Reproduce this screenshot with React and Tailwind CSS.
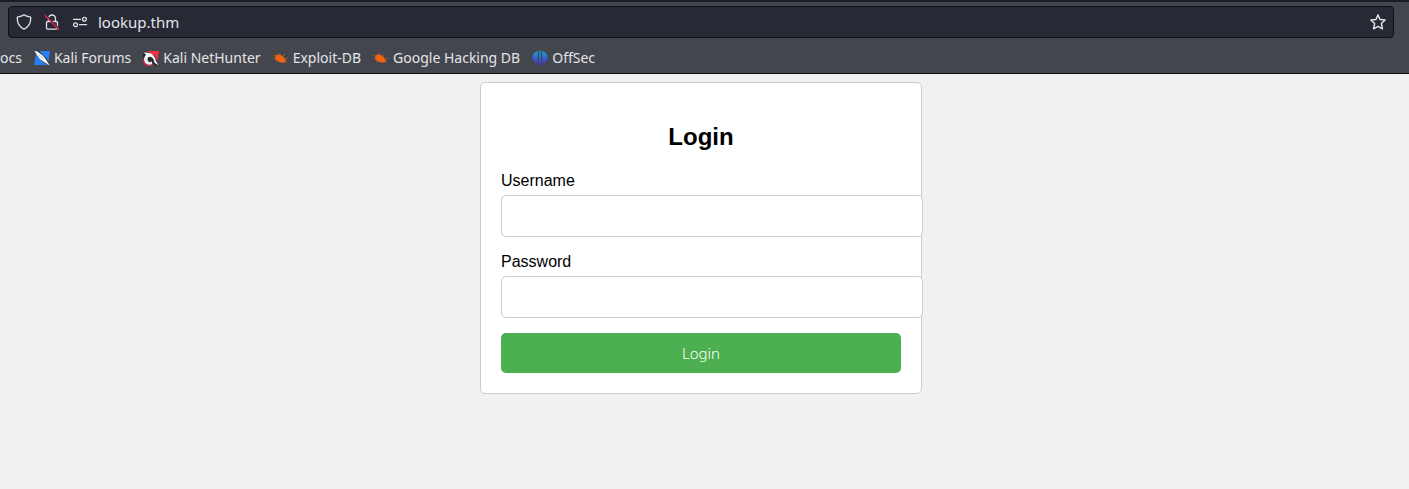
import React from "react";

function ShieldIcon() {
  return (
    <svg width="16" height="16" viewBox="0 0 16 16" fill="none" stroke="#e4e4e8" strokeWidth="1.3" strokeLinejoin="round" aria-hidden="true">
      <path d="M8 .8C9.6 2 12 2.7 14.7 3.2c.3 5-1.6 9.600-6.700 12C2.900 12.800 1 8.200 1.300 3.200 4 2.700 6.400 2 8 .8Z" />
    </svg>
  );
}

function InsecureLockIcon() {
  return (
    <svg width="16" height="16" viewBox="0 0 16 16" fill="none" aria-hidden="true">
      <path d="M4.500 7.500V4.500a3.500 3.500 0 0 1 7 0v3M3.700 7.500h8.600a1.200 1.200 0 0 1 1.200 1.200v5a1.500 1.500 0 0 1-1.500 1.500H4a1.500 1.500 0 0 1-1.500-1.500v-5a1.200 1.200 0 0 1 1.200-1.200Z" stroke="#e4e4e8" strokeWidth="1.3" />
      <path d="M1.800 1.200 15.300 14.700" stroke="#272935" strokeWidth="1.500" />
      <path d="M1.300 1.800 14.700 15.200" stroke="#e22850" strokeWidth="1.4" strokeLinecap="round" />
    </svg>
  );
}

function PermissionsIcon() {
  return (
    <svg width="16" height="16" viewBox="0 0 16 16" fill="none" stroke="#e4e4e8" strokeWidth="1.3" strokeLinecap="round" aria-hidden="true">
      <circle cx="12.500" cy="5.300" r="1.900" />
      <path d="M1.500 5.300h7" />
      <circle cx="3.500" cy="10.700" r="1.900" />
      <path d="M7.500 10.700h7" />
    </svg>
  );
}

function StarIcon() {
  return (
    <svg width="16" height="16" viewBox="0 0 18 18" fill="none" stroke="#e4e4e8" strokeWidth="1.6" strokeLinejoin="round" aria-hidden="true">
      <path d="m9 1 2.300 5.200 5.700.6-4.200 3.900 1.200 6L9 13.900 4 16.700l1.200-6L1 6.800l5.700-.6L9 1Z" />
    </svg>
  );
}

function ForumsIcon() {
  return (
    <svg width="16" height="16" viewBox="0 0 16 16" aria-hidden="true">
      <path d="M2.500 1H16l-2 14H0L2.500 1Z" fill="#267df5" />
      <path d="M.5 0 5 1l8 8 3 6.500-6-2.500-7-7L.5 0Z" fill="#24262e" />
      <path d="M.3.800 3.500 1.500 8.800 5.500l3.200 4 3.800 6-6-3.500-4.300-3.200L3 5.300.3.800Z" fill="#f5f5f5" />
      <path d="m4.500 4.500 5 4.500" stroke="#a5a8b0" strokeWidth=".6" />
    </svg>
  );
}

function NetHunterIcon() {
  return (
    <svg width="16" height="16" viewBox="0 0 16 16" aria-hidden="true">
      <path d="M2.500 1H16l-2 12-8-3-6 3L2.500 1Z" fill="#f5313f" />
      <path d="M0 4 1.500 1 6 2l6 4 4 9.500h-4L8 10l-2 5-5-1L0 4Z" fill="#24262e" />
      <path d="M.5 9.500 2 14l4 1.500h3.500" fill="none" stroke="#d8214c" strokeWidth="1.600" />
      <path d="M.5 2.500C3 2.300 5 2.300 7 3c3.500 1.300 5.300 4.500 6 8l2.700 4.500-4.200-2.700C11 9.500 9.300 6.500 6.500 6.700 4.300 7 4 10 5.500 11.500c1 1 2.500.8 3.500 0v2.500c-2.500 1.500-5.500.5-7-1.500C.5 10 .8 6.700 3 4.800L.5 2.500Z" fill="#f5f5f5" />
    </svg>
  );
}

function BugIcon() {
  return (
    <svg width="16" height="16" viewBox="0 0 16 16" aria-hidden="true">
      <path d="M2.500 6C4.500 3.500 7.500 4.500 10 6.500l3 4-1.500 2H7.500L3.500 10.500 1.800 8l.7-2Z" fill="#f26411" />
      <path d="M3.500 6.500 .5 5M3 8.500 .5 9.500M5 11l-2 1.500M7.500 5 6 3M10 6.500l1.500-2.500M11.500 9l3.500-1M12 11.500l2 1" fill="none" stroke="#b65a2c" strokeWidth=".8" />
    </svg>
  );
}

function OffSecIcon() {
  return (
    <svg width="16" height="16" viewBox="0 0 16 16" aria-hidden="true">
      <defs>
        <linearGradient id="offsec" gradientUnits="userSpaceOnUse" x1="0" y1="0" x2="0" y2="16">
          <stop offset="0" stopColor="#10a9c8" />
          <stop offset=".5" stopColor="#3267d0" />
          <stop offset="1" stopColor="#5b22d0" />
        </linearGradient>
      </defs>
      <path d="M6 1v4L5.200 13.500C2.500 12.800.5 10.500.5 7.500S2.800 1.600 6 1Z" fill="url(#offsec)" />
      <path d="M7.200.5h1.600l.4 15H6.800Z" fill="url(#offsec)" />
      <path d="M10 1v4l.8 8.500c2.700-.7 4.700-3 4.700-6S13.200 1.600 10 1Z" fill="url(#offsec)" />
    </svg>
  );
}

const bookmarks = [
  { label: "Kali Forums", Icon: ForumsIcon },
  { label: "Kali NetHunter", Icon: NetHunterIcon },
  { label: "Exploit-DB", Icon: BugIcon },
  { label: "Google Hacking DB", Icon: BugIcon },
  { label: "OffSec", Icon: OffSecIcon },
];

function BrowserToolbar() {
  return (
    <header className="border-t-2 border-b border-t-[#1c1d22] border-b-[#0c0c12] bg-[#44464e] font-['Noto_Sans',sans-serif] text-[#e4e4e8]">
      <div className="pt-1 pr-[15px] pl-2">
        <div className="flex h-8 items-center rounded border border-[#0f1016] bg-[#272935] px-[7px]">
          <div className="flex gap-3">
            <button type="button" aria-label="Tracking protection"><ShieldIcon /></button>
            <button type="button" aria-label="Connection not secure"><InsecureLockIcon /></button>
            <button type="button" aria-label="Site permissions"><PermissionsIcon /></button>
          </div>
          <input
            type="text"
            aria-label="Address"
            defaultValue="lookup.thm"
            className="ml-2.5 min-w-0 flex-1 bg-transparent text-[15px] outline-none"
          />
          <button type="button" aria-label="Bookmark this page"><StarIcon /></button>
        </div>
      </div>
      <nav aria-label="Bookmarks" className="flex h-[35px] items-center gap-3 overflow-hidden pt-1 text-sm whitespace-nowrap">
        <a href="#docs">ocs</a>
        {bookmarks.map(({ label, Icon }) => (
          <a key={label} href="#bookmark" className="flex items-center gap-1">
            <Icon />
            {label}
          </a>
        ))}
      </nav>
    </header>
  );
}

function Field({ id, label, type }) {
  return (
    <div className="mb-[15px]">
      <label htmlFor={id} className="mb-[5px] block leading-[19px]">{label}</label>
      <input
        id={id}
        type={type}
        className="box-content block h-5 w-full rounded-[5px] border border-[#ccc] bg-white p-2.5 outline-none"
      />
    </div>
  );
}

export default function App() {
  return (
    <div className="flex min-h-screen flex-col bg-[#f1f1f1]">
      <BrowserToolbar />
      <main className="flex-1 py-2 pr-[15px] pl-2">
        <form
          className="mx-auto max-w-[442px] rounded-[5px] border border-[#ccc] bg-white p-5 font-['Liberation_Sans',Arial,sans-serif] text-base text-black"
          onSubmit={(event) => event.preventDefault()}
        >
          <h2 className="my-5 text-center text-2xl leading-7 font-bold">Login</h2>
          <Field id="username" label="Username" type="text" />
          <Field id="password" label="Password" type="password" />
          <button
            type="submit"
            className="block h-10 w-full rounded-[5px] bg-[#4caf50] font-['Noto_Sans',sans-serif] text-[15px] font-light text-white"
          >
            Login
          </button>
        </form>
      </main>
    </div>
  );
}
